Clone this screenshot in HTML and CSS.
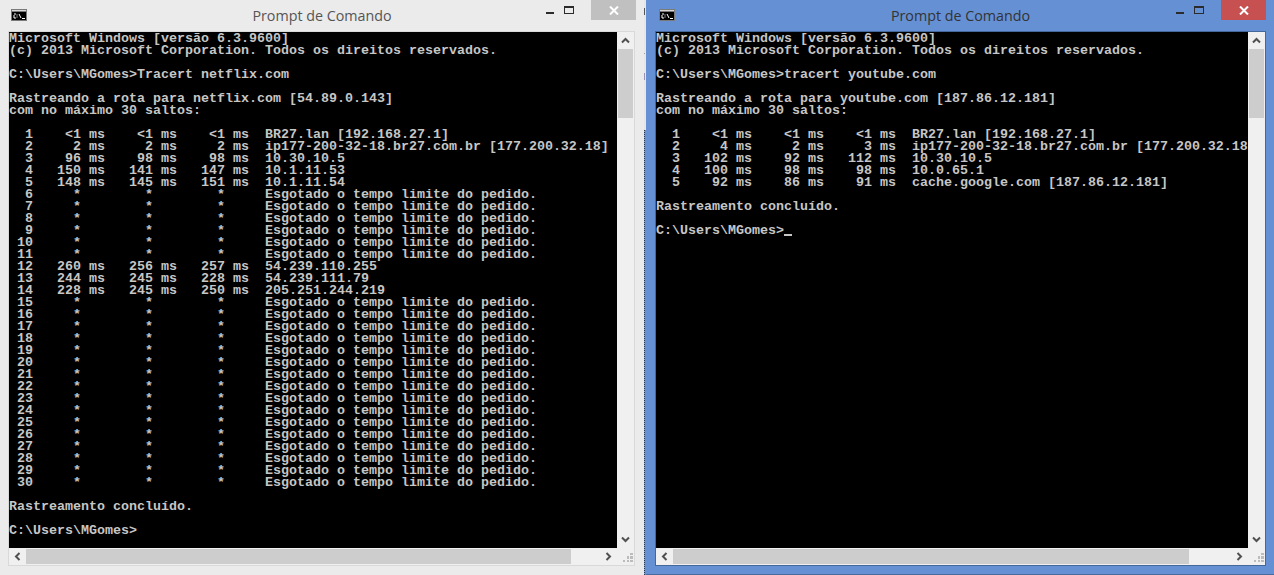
FILE: index.html
```html
<!DOCTYPE html>
<html lang="pt">
<head>
<meta charset="utf-8">
<title>Prompt de Comando</title>
<link rel="stylesheet" href="styles.css">
</head>
<body>
<main class="desktop">
  <section class="win win-inactive">
    <header class="titlebar">
      <svg class="app-icon" width="16" height="12" viewBox="0 0 16 12"><rect width="16" height="12" fill="#7a7a7a"/><rect x="1" y="1" width="14" height="1" fill="#d8d8d8"/><rect x="1" y="3" width="14" height="8" fill="#000"/><path d="M3 5h2M3 6v3M3 9h2M6 5.500v1M6 7.500v1M8 5l2 4M11 9.500h3" stroke="#fff" fill="none"/></svg>
      <h1 class="title">Prompt de Comando</h1>
      <div class="controls">
        <span class="btn btn-min"><i class="glyph-min"></i></span>
        <span class="btn btn-max"><i class="glyph-max"></i></span>
        <span class="btn btn-close"><svg width="10" height="9" viewBox="0 0 10 9"><path d="M1 .5l8 8M9 .5l-8 8" stroke="#fff" stroke-width="2" fill="none"/></svg></span>
      </div>
    </header>
    <div class="client">
<pre class="console console-left">Microsoft Windows [versão 6.3.9600]
(c) 2013 Microsoft Corporation. Todos os direitos reservados.

C:\Users\MGomes&gt;Tracert netflix.com

Rastreando a rota para netflix.com [54.89.0.143]
com no máximo 30 saltos:

  1    &lt;1 ms    &lt;1 ms    &lt;1 ms  BR27.lan [192.168.27.1]
  2     2 ms     2 ms     2 ms  ip177-200-32-18.br27.com.br [177.200.32.18]
  3    96 ms    98 ms    98 ms  10.30.10.5
  4   150 ms   141 ms   147 ms  10.1.11.53
  5   148 ms   145 ms   151 ms  10.1.11.54
  6     *        *        *     Esgotado o tempo limite do pedido.
  7     *        *        *     Esgotado o tempo limite do pedido.
  8     *        *        *     Esgotado o tempo limite do pedido.
  9     *        *        *     Esgotado o tempo limite do pedido.
 10     *        *        *     Esgotado o tempo limite do pedido.
 11     *        *        *     Esgotado o tempo limite do pedido.
 12   260 ms   256 ms   257 ms  54.239.110.255
 13   244 ms   245 ms   228 ms  54.239.111.79
 14   228 ms   245 ms   250 ms  205.251.244.219
 15     *        *        *     Esgotado o tempo limite do pedido.
 16     *        *        *     Esgotado o tempo limite do pedido.
 17     *        *        *     Esgotado o tempo limite do pedido.
 18     *        *        *     Esgotado o tempo limite do pedido.
 19     *        *        *     Esgotado o tempo limite do pedido.
 20     *        *        *     Esgotado o tempo limite do pedido.
 21     *        *        *     Esgotado o tempo limite do pedido.
 22     *        *        *     Esgotado o tempo limite do pedido.
 23     *        *        *     Esgotado o tempo limite do pedido.
 24     *        *        *     Esgotado o tempo limite do pedido.
 25     *        *        *     Esgotado o tempo limite do pedido.
 26     *        *        *     Esgotado o tempo limite do pedido.
 27     *        *        *     Esgotado o tempo limite do pedido.
 28     *        *        *     Esgotado o tempo limite do pedido.
 29     *        *        *     Esgotado o tempo limite do pedido.
 30     *        *        *     Esgotado o tempo limite do pedido.

Rastreamento concluído.

C:\Users\MGomes&gt;</pre>
      <div class="vscroll">
        <span class="arrow"><svg width="9" height="7" viewBox="0 0 9 7"><path d="M1 5.500l3.500-3.500 3.500 3.500" stroke="#505050" stroke-width="2" fill="none"/></svg></span>
        <span class="vthumb"></span>
        <span class="vtrack"></span>
        <span class="arrow"><svg width="9" height="7" viewBox="0 0 9 7"><path d="M1 1.500l3.500 3.500 3.500-3.500" stroke="#505050" stroke-width="2" fill="none"/></svg></span>
      </div>
      <div class="hscroll">
        <span class="arrow"><svg width="7" height="9" viewBox="0 0 7 9"><path d="M5.500 1l-3.500 3.500 3.500 3.500" stroke="#505050" stroke-width="2" fill="none"/></svg></span>
        <span class="hthumb hthumb-left"></span>
        <span class="htrack"></span>
        <span class="arrow"><svg width="7" height="9" viewBox="0 0 7 9"><path d="M1.500 1l3.500 3.500-3.500 3.500" stroke="#505050" stroke-width="2" fill="none"/></svg></span>
      </div>
      <div class="grip"><svg width="11" height="11" viewBox="0 0 11 11"><path d="M8 0h3v2h-3zM5 3h2v3h-2zM8 3h3v3h-3zM1 7h2v2h-2zM5 7h2v2h-2zM8 7h3v2h-3z" fill="#bcbcbc"/></svg></div>
    </div>
  </section>
  <div class="seam"></div>
  <section class="win win-active">
    <header class="titlebar">
      <svg class="app-icon" width="16" height="12" viewBox="0 0 16 12"><rect width="16" height="12" fill="#7a7a7a"/><rect x="1" y="1" width="14" height="1" fill="#d8d8d8"/><rect x="1" y="3" width="14" height="8" fill="#000"/><path d="M3 5h2M3 6v3M3 9h2M6 5.500v1M6 7.500v1M8 5l2 4M11 9.500h3" stroke="#fff" fill="none"/></svg>
      <h1 class="title">Prompt de Comando</h1>
      <div class="controls">
        <span class="btn btn-min"><i class="glyph-min"></i></span>
        <span class="btn btn-max"><i class="glyph-max"></i></span>
        <span class="btn btn-close"><svg width="10" height="9" viewBox="0 0 10 9"><path d="M1 .5l8 8M9 .5l-8 8" stroke="#fff" stroke-width="2" fill="none"/></svg></span>
      </div>
    </header>
    <div class="client">
<pre class="console console-right">Microsoft Windows [versão 6.3.9600]
(c) 2013 Microsoft Corporation. Todos os direitos reservados.

C:\Users\MGomes&gt;tracert youtube.com

Rastreando a rota para youtube.com [187.86.12.181]
com no máximo 30 saltos:

  1    &lt;1 ms    &lt;1 ms    &lt;1 ms  BR27.lan [192.168.27.1]
  2     4 ms     2 ms     3 ms  ip177-200-32-18.br27.com.br [177.200.32.18]
  3   102 ms    92 ms   112 ms  10.30.10.5
  4   100 ms    98 ms    98 ms  10.0.65.1
  5    92 ms    86 ms    91 ms  cache.google.com [187.86.12.181]

Rastreamento concluído.

C:\Users\MGomes&gt;<span class="cursor"></span></pre>
      <div class="vscroll">
        <span class="arrow"><svg width="9" height="7" viewBox="0 0 9 7"><path d="M1 5.500l3.500-3.500 3.500 3.500" stroke="#505050" stroke-width="2" fill="none"/></svg></span>
        <span class="vthumb"></span>
        <span class="vtrack"></span>
        <span class="arrow"><svg width="9" height="7" viewBox="0 0 9 7"><path d="M1 1.500l3.500 3.500 3.500-3.500" stroke="#505050" stroke-width="2" fill="none"/></svg></span>
      </div>
      <div class="hscroll">
        <span class="arrow"><svg width="7" height="9" viewBox="0 0 7 9"><path d="M5.500 1l-3.500 3.500 3.500 3.500" stroke="#505050" stroke-width="2" fill="none"/></svg></span>
        <span class="hthumb hthumb-right"></span>
        <span class="htrack"></span>
        <span class="arrow"><svg width="7" height="9" viewBox="0 0 7 9"><path d="M1.500 1l3.500 3.500-3.500 3.500" stroke="#505050" stroke-width="2" fill="none"/></svg></span>
      </div>
      <div class="grip"><svg width="11" height="11" viewBox="0 0 11 11"><path d="M8 0h3v2h-3zM5 3h2v3h-2zM8 3h3v3h-3zM1 7h2v2h-2zM5 7h2v2h-2zM8 7h3v2h-3z" fill="#bcbcbc"/></svg></div>
    </div>
  </section>
</main>
</body>
</html>
```
FILE: styles.css
```css
* { box-sizing: border-box; }
html, body { margin: 0; padding: 0; background: #ebebeb; }
.desktop { display: flex; width: 1274px; height: 575px; overflow: hidden; }

.win { display: flex; flex-direction: column; height: 575px; }
.win-inactive { width: 644px; padding: 0 9px 9px 8px; background: #ebebeb; color: #555; --edge: #d9d9d9; }
.win-active { width: 628px; padding: 0 8px 8px 9px; background: #6590d3; color: #333; border-bottom: 1px solid #4a6a9c; --edge: #45689c; }

.seam {
  width: 2px;
  background:
    linear-gradient(90deg, #555 0 1px, transparent 1px) 0 8px / 2px 7px no-repeat,
    linear-gradient(90deg, #a9a08c 0 1px, transparent 1px) 0 53px / 2px 1px no-repeat,
    linear-gradient(90deg, #9a8fb5 0 1px, transparent 1px) 0 73px / 2px 7px no-repeat,
    linear-gradient(#e6e6e6 0 130px, transparent 130px),
    linear-gradient(90deg, transparent 0 1px, #6590d3 1px),
    repeating-linear-gradient(#26354d 0 1px, #8fa9d0 1px 2px);
}

.titlebar { display: grid; grid-template-columns: 1fr auto 1fr; height: 31px; flex: none; }
.win-inactive .titlebar { margin-right: -1px; }
.win-active .titlebar { margin-left: -9px; padding-left: 9px; }
.app-icon { margin: 9px 0 0 3px; }
.win-active .app-icon { margin-left: 4px; }
.title { margin: 0; font: 400 14.300px/32px "Open Sans", sans-serif; white-space: nowrap; }
.controls { display: flex; justify-content: flex-end; align-items: flex-start; }
.btn { display: flex; height: 20px; }
.btn-min { width: 26px; padding: 12px 0 0 8px; }
.btn-max { width: 27px; padding: 6px 0 0 0; }
.btn-close { width: 45px; align-items: center; justify-content: center; padding-top: 1px; }
.win-inactive .btn-close { background: #c0c0c0; }
.win-active .btn-close { background: #c75050; }
.glyph-min { display: block; width: 8px; height: 2px; background: #2b2b2b; }
.glyph-max { display: block; width: 10px; height: 8px; border: 1px solid #2b2b2b; border-top-width: 2px; }

.client {
  display: grid;
  flex: 1;
  min-height: 0;
  border: 1px solid var(--edge);
  background: #f0f0f0;
  grid-template-rows: 516px 17px;
}
.win-inactive .client { grid-template-columns: 608px 17px; }
.win-active .client { grid-template-columns: 592px 17px; }

.console {
  margin: 0;
  padding-top: 1px;
  overflow: hidden;
  background: #000;
  color: #c6c6c6;
  font: 700 13.333px/12px "Liberation Mono", monospace;
  white-space: pre;
}
.cursor {
  display: inline-block;
  width: 8px;
  height: 11px;
  vertical-align: top;
  border-bottom: 2px solid #c6c6c6;
}

.vscroll { display: flex; flex-direction: column; background: #f0f0f0; }
.hscroll { display: flex; background: #f0f0f0; }
.arrow { display: flex; flex: none; width: 17px; height: 17px; align-items: center; justify-content: center; }
.vthumb { flex: none; height: 69px; margin: 0 1px; background: #cdcdcd; }
.vtrack, .htrack { flex: 1; }
.hthumb { flex: none; margin: 1px 0; background: #cdcdcd; }
.hthumb-left { width: 545px; }
.hthumb-right { width: 516px; }
.grip { display: flex; justify-content: flex-end; align-items: flex-end; padding: 0 1px 1px 0; }
```
